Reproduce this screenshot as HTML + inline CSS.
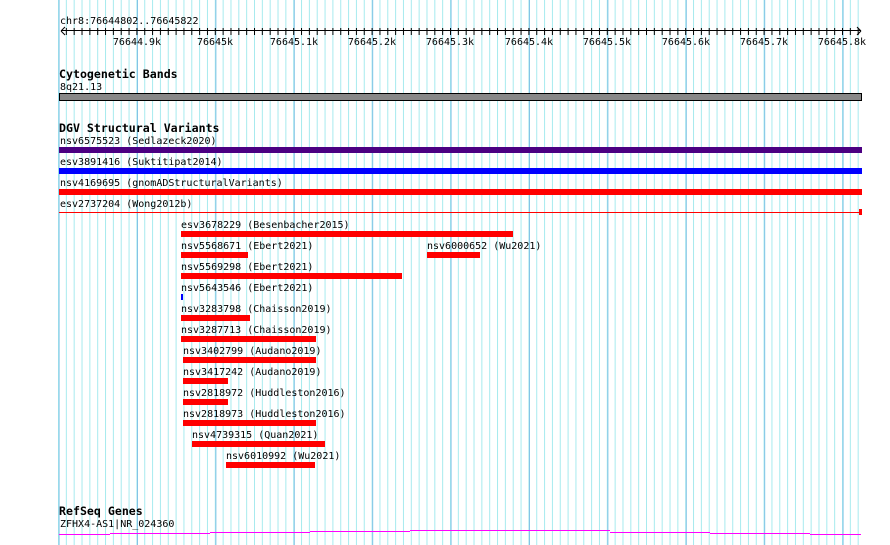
<!DOCTYPE html>
<html><head><meta charset="utf-8"><style>
html,body{margin:0;padding:0;background:#fff;}
svg{display:block;}
text{font-family:"DejaVu Sans Mono","Liberation Mono",monospace;font-size:10px;fill:#000;}
.b{font-weight:bold;font-size:11.6px;}
</style></head><body>
<svg width="890" height="545" viewBox="0 0 890 545" xmlns="http://www.w3.org/2000/svg">
<defs>
<pattern id="minor" patternUnits="userSpaceOnUse" x="58" y="0" width="7.84" height="545">
<rect x="0" y="0" width="1" height="545" fill="#a6eaee"/>
</pattern>
<pattern id="major" patternUnits="userSpaceOnUse" x="58.6" y="0" width="78.4" height="545">
<rect x="0" y="0" width="1" height="545" fill="#84c4e6"/>
</pattern>
<pattern id="tick" patternUnits="userSpaceOnUse" x="58" y="0" width="7.84" height="545">
<rect x="0" y="28" width="1" height="7" fill="#000"/>
</pattern>
</defs>
<rect x="58" y="0" width="802" height="545" fill="url(#minor)"/>
<rect x="58" y="0" width="802" height="545" fill="url(#major)"/>

<text x="60" y="24">chr8:76644802..76645822</text>
<rect x="61" y="30" width="800" height="1" fill="#000"/>
<rect x="62" y="28" width="798" height="7" fill="url(#tick)"/>
<path d="M61 31 L65 27 M61 31 L65 35 M861 31 L857 27 M861 31 L857 35" stroke="#000" fill="none"/>
<g text-anchor="middle">
<text x="137" y="45">76644.9k</text>
<text x="215" y="45">76645k</text>
<text x="294" y="45">76645.1k</text>
<text x="372" y="45">76645.2k</text>
<text x="450" y="45">76645.3k</text>
<text x="529" y="45">76645.4k</text>
<text x="607" y="45">76645.5k</text>
<text x="686" y="45">76645.6k</text>
<text x="764" y="45">76645.7k</text>
<text x="842" y="45">76645.8k</text>
</g>

<text class="b" x="59" y="78">Cytogenetic Bands</text>
<text x="60" y="90">8q21.13</text>
<rect x="59.5" y="93.5" width="802" height="7" fill="#888" stroke="#000"/>

<text class="b" x="59" y="132">DGV Structural Variants</text>
<text x="60" y="144">nsv6575523 (Sedlazeck2020)</text>
<rect x="59" y="147" width="803" height="6" fill="#4b0082"/>
<text x="60" y="165">esv3891416 (Suktitipat2014)</text>
<rect x="59" y="168" width="803" height="6" fill="#0000ff"/>
<text x="60" y="186">nsv4169695 (gnomADStructuralVariants)</text>
<rect x="59" y="189" width="803" height="6" fill="#ff0000"/>
<text x="60" y="207">esv2737204 (Wong2012b)</text>
<rect x="59" y="212" width="803" height="1" fill="#ff0000"/>
<rect x="859" y="209" width="3" height="6" fill="#ff0000"/>

<text x="181" y="228">esv3678229 (Besenbacher2015)</text>
<rect x="181" y="231" width="332" height="6" fill="#f00"/>
<text x="181" y="249">nsv5568671 (Ebert2021)</text>
<rect x="181" y="252" width="67" height="6" fill="#f00"/>
<text x="427" y="249">nsv6000652 (Wu2021)</text>
<rect x="427" y="252" width="53" height="6" fill="#f00"/>
<text x="181" y="270">nsv5569298 (Ebert2021)</text>
<rect x="181" y="273" width="221" height="6" fill="#f00"/>
<text x="181" y="291">nsv5643546 (Ebert2021)</text>
<rect x="181" y="294" width="2" height="6" fill="#0000ff"/>
<text x="181" y="312">nsv3283798 (Chaisson2019)</text>
<rect x="181" y="315" width="69" height="6" fill="#f00"/>
<text x="181" y="333">nsv3287713 (Chaisson2019)</text>
<rect x="181" y="336" width="135" height="6" fill="#f00"/>
<text x="183" y="354">nsv3402799 (Audano2019)</text>
<rect x="183" y="357" width="133" height="6" fill="#f00"/>
<text x="183" y="375">nsv3417242 (Audano2019)</text>
<rect x="183" y="378" width="45" height="6" fill="#f00"/>
<text x="183" y="396">nsv2818972 (Huddleston2016)</text>
<rect x="183" y="399" width="45" height="6" fill="#f00"/>
<text x="183" y="417">nsv2818973 (Huddleston2016)</text>
<rect x="183" y="420" width="133" height="6" fill="#f00"/>
<text x="192" y="438">nsv4739315 (Quan2021)</text>
<rect x="192" y="441" width="133" height="6" fill="#f00"/>
<text x="226" y="459">nsv6010992 (Wu2021)</text>
<rect x="226" y="462" width="89" height="6" fill="#f00"/>

<text class="b" x="59" y="515">RefSeq Genes</text>
<text x="60" y="527">ZFHX4-AS1|NR_024360</text>
<g fill="#ff00ff">
<rect x="59" y="534" width="51" height="1"/>
<rect x="110" y="533" width="100" height="1"/>
<rect x="210" y="532" width="100" height="1"/>
<rect x="310" y="531" width="100" height="1"/>
<rect x="410" y="530" width="100" height="1"/>
<rect x="510" y="530" width="100" height="1"/>
<rect x="610" y="532" width="100" height="1"/>
<rect x="710" y="533" width="100" height="1"/>
<rect x="810" y="534" width="51" height="1"/>
</g>
</svg>
</body></html>
